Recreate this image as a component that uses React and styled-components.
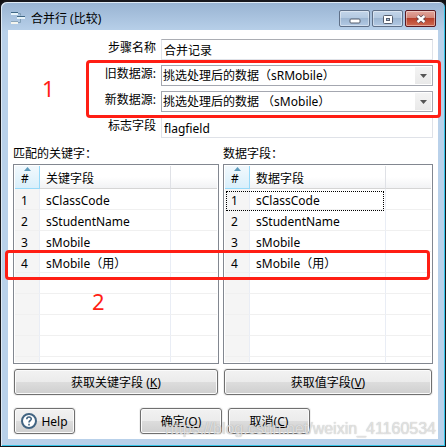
import React, { useState } from "react";
import styled, { createGlobalStyle } from "styled-components";

const GlobalStyle = createGlobalStyle`
  * {
    box-sizing: border-box;
  }
  body {
    margin: 0;
    background: #101014;
    font-family: "Noto Sans", "Noto Sans CJK SC", sans-serif;
    font-size: 12px;
    color: #000;
  }
  button, input, select {
    font: inherit;
    color: inherit;
  }
`;

const Window = styled.main`
  position: relative;
  display: flex;
  flex-direction: column;
  min-height: 100vh;
  padding: 0 7px 7px;
  border: 1px solid #17171c;
  border-top-width: 2px;
  border-radius: 7px 7px 0 0;
  background: linear-gradient(#98b3d2, #b9d1ea 30px);
  box-shadow: inset 1px 1px #dfeaf5, inset -1px -1px #35c4e8;
`;
const TitleBar = styled.header`
  display: flex;
  align-items: flex-start;
  height: 28px;
  padding: 8px 2px 0 3px;
`;
const Title = styled.h1`
  flex: 1;
  margin: 0 0 0 6px;
  font-size: 12px;
  line-height: 18px;
  font-weight: 400;
`;
const Controls = styled.div`
  display: flex;
  gap: 2px;
`;
const ControlButton = styled.button`
  display: flex;
  align-items: center;
  justify-content: center;
  width: 31px;
  height: 17px;
  padding: 0;
  border: 1px solid ${(props) => (props.$close ? "#5a1820" : "#5f7088")};
  border-radius: 2px;
  background: ${(props) =>
    props.$close
      ? "linear-gradient(#e3a59b, #d08376 50%, #b8402b 50%, #cf6a52)"
      : "linear-gradient(#c3d5e9, #b2c8e0 50%, #9db6d2 50%, #b3cae4)"};
  box-shadow: inset 0 0 0 1px rgba(255, 255, 255, 0.4);
`;
const Body = styled.div`
  flex: 1;
  padding: 9px 5px 5px;
  background: #fff;
`;
const Form = styled.form`
  display: flex;
  flex-direction: column;
  gap: 5px;
`;
const Field = styled.div`
  display: flex;
  height: 21px;
`;
const Label = styled.label`
  width: 148px;
  padding-right: 5px;
  line-height: 18px;
  text-align: right;
`;
const Input = styled.input`
  flex: 1;
  min-width: 0;
  padding: 1px 2px 0;
  border: 1px solid #dfe2e8;
  border-top-color: #abadb3;
  outline: none;
`;
const SelectBox = styled.div`
  position: relative;
  display: flex;
  flex: 1;
`;
const Select = styled.select`
  flex: 1;
  padding: 0 20px 0 1px;
  border: 1px solid #a4a7b0;
  border-radius: 0;
  background: #fff;
  appearance: none;
`;
const Arrow = styled.span`
  position: absolute;
  top: 2px;
  right: 2px;
  bottom: 2px;
  display: flex;
  align-items: center;
  justify-content: center;
  width: 16px;
  background: linear-gradient(#f4f4f4, #e9e9e9);
  pointer-events: none;
`;
const Panels = styled.div`
  display: grid;
  grid-template-columns: 103fr 105fr;
  gap: 4px;
  margin-top: 5px;
`;
const Panel = styled.section`
  display: flex;
  flex-direction: column;
`;
const PanelTitle = styled.h2`
  margin: 0;
  font-size: 12px;
  line-height: 21px;
  font-weight: 400;
`;
const TableFrame = styled.div`
  position: relative;
  margin-bottom: 5px;
  padding: 1px;
  border: 1px solid #828790;
`;
const Table = styled.table`
  width: 100%;
  border-collapse: separate;
  border-spacing: 0;
  table-layout: fixed;
`;
const IndexCol = styled.col`
  width: 25px;
`;
const NameCol = styled.col`
  width: ${(props) => props.$width};
`;
const HeadCell = styled.th`
  position: relative;
  height: 23px;
  padding: 4px 0 0 6px;
  border-right: 1px solid #dfe1e6;
  border-bottom: 1px solid #d5d5d5;
  background: linear-gradient(#fff 50%, #f1f2f4);
  line-height: 18px;
  font-weight: 400;
  text-align: left;

  &:first-child {
    border-color: #96d9f9;
    background: linear-gradient(#f2f9fd, #d9effb);
  }
  &:last-child {
    border-right: 0;
  }
`;
const SortMark = styled.svg`
  position: absolute;
  top: 1px;
  left: 9px;
`;
const Cell = styled.td`
  height: 21px;
  padding: 4px 0 0 6px;
  border-right: 1px solid #e9edf5;
  border-bottom: 1px solid #f0f0f0;
  line-height: 16px;
  white-space: nowrap;

  &:first-child {
    background: #f5f5f5;
  }
  &:last-child {
    border-right: 0;
  }
  tr:last-child > & {
    height: 5px;
    border-bottom: 0;
  }
`;
const FocusRing = styled.div`
  position: absolute;
  top: 26px;
  left: 2px;
  width: ${(props) => props.$width};
  height: 20px;
  border: 1px dotted #000;
  pointer-events: none;
`;
const Button = styled.button`
  display: flex;
  align-items: center;
  justify-content: center;
  gap: 4px;
  min-width: ${(props) => props.$width || "auto"};
  height: 26px;
  margin: 0 1px;
  padding: 0 5px;
  border: 1px solid #707070;
  border-radius: 3px;
  background: linear-gradient(#f2f2f2, #ebebeb 50%, #dddddd 50%, #cfcfcf);
  box-shadow: inset 0 0 0 1px #fbfbfb, 0 0 0 1px #f0f0f0;
`;
const Footer = styled.footer`
  display: grid;
  grid-template-columns: 122px auto 1fr;
  gap: 4px;
  justify-items: start;
  margin-top: 13px;
`;
const RedBox = styled.div`
  position: absolute;
  top: ${(props) => props.$top};
  left: ${(props) => props.$left};
  right: ${(props) => props.$right};
  height: ${(props) => props.$height};
  border: 3px solid #ff1e14;
  border-radius: 4px;
  pointer-events: none;
`;
const RedNumber = styled.span`
  position: absolute;
  top: ${(props) => props.$top};
  left: ${(props) => props.$left};
  color: #ff1e14;
  font-size: 22px;
  line-height: 24px;
`;
const Watermark = styled.span`
  position: absolute;
  right: 9px;
  bottom: 7px;
  color: rgba(235, 235, 235, 0.8);
  font-family: "Liberation Sans", sans-serif;
  font-size: 16px;
  line-height: 20px;
  text-shadow: 0 0 1px rgba(120, 120, 120, 0.6);
  pointer-events: none;
`;

const ROWS = ["sClassCode", "sStudentName", "sMobile", "sMobile（用）", "", "", "", "", ""];

function WindowIcon() {
  return (
    <svg width="14" height="16" viewBox="0 0 14 16">
      <path d="M7 3.5h2.500v2M6 12.500h3.500v-4" fill="none" stroke="#7f9db5" />
      <rect x="0" y="2" width="7" height="3" fill="#e8f4fa" />
      <path d="M0 2.500h7" stroke="#3f6785" />
      <rect x="6" y="6" width="8" height="3" fill="#e8f4fa" />
      <path d="M6 6.500h8" stroke="#3f6785" />
      <rect x="0" y="11" width="7" height="3" fill="#f4f4ee" />
      <path d="M0 11.500h7" stroke="#8ba5b9" />
    </svg>
  );
}

function HelpIcon() {
  return (
    <svg width="16" height="16" viewBox="0 0 16 16" fill="none" stroke="#416482" strokeWidth="2">
      <circle cx="8" cy="8" r="7" fill="#fff" />
      <path d="M5.800 6.200c0-3 4.600-2.800 4.500-.2C10.200 7.600 8 7.500 8 9.500M8 10.800v1.700" strokeWidth="1.600" />
    </svg>
  );
}

function SourceSelect({ id, label, value }) {
  return (
    <Field>
      <Label htmlFor={id}>{label}</Label>
      <SelectBox>
        <Select id={id} defaultValue={value}>
          <option>{value}</option>
        </Select>
        <Arrow>
          <svg width="7" height="4">
            <path d="M0 0h7L3.500 4z" fill="#555" />
          </svg>
        </Arrow>
      </SelectBox>
    </Field>
  );
}

function FieldTable({ title, heading, nameWidth, focusWidth, children }) {
  return (
    <Panel>
      <PanelTitle>{title}</PanelTitle>
      <TableFrame>
        <Table aria-label={heading}>
          <colgroup>
            <IndexCol />
            <NameCol $width={nameWidth} />
            <col />
          </colgroup>
          <thead>
            <tr>
              <HeadCell>
                #
                <SortMark width="7" height="4">
                  <path d="M0 4L3.500 0 7 4z" fill="#5f9cbd" />
                </SortMark>
              </HeadCell>
              <HeadCell>{heading}</HeadCell>
              <HeadCell />
            </tr>
          </thead>
          <tbody>
            {ROWS.map((name, i) => (
              <tr key={i}>
                <Cell>{name && i + 1}</Cell>
                <Cell>{name}</Cell>
                <Cell />
              </tr>
            ))}
          </tbody>
        </Table>
        {focusWidth && <FocusRing $width={focusWidth} />}
      </TableFrame>
      {children}
    </Panel>
  );
}

function App() {
  const [stepName, setStepName] = useState("合并记录");
  const [flagField, setFlagField] = useState("flagfield");

  return (
    <>
      <GlobalStyle />
      <Window>
        <TitleBar>
          <WindowIcon />
          <Title>合并行 (比较)</Title>
          <Controls>
            <ControlButton aria-label="最小化">
              <svg width="12" height="12">
                <rect x="1" y="6" width="10" height="4" rx="1" fill="#fff" stroke="#555e6e" />
              </svg>
            </ControlButton>
            <ControlButton aria-label="最大化">
              <svg width="12" height="12">
                <rect x="1.500" y="2.500" width="9" height="8" rx="1" fill="#fff" stroke="#555e6e" />
                <rect x="4.500" y="5.500" width="3" height="2" fill="#a8c0da" stroke="#555e6e" />
              </svg>
            </ControlButton>
            <ControlButton $close aria-label="关闭">
              <svg width="12" height="12">
                <path d="M2.500 3l7 6M9.500 3l-7 6" stroke="#5b4650" strokeWidth="4" />
                <path d="M2.500 3l7 6M9.500 3l-7 6" stroke="#fff" strokeWidth="2.400" />
              </svg>
            </ControlButton>
          </Controls>
        </TitleBar>
        <Body>
          <Form>
            <Field>
              <Label htmlFor="step">步骤名称</Label>
              <Input id="step" value={stepName} onChange={(e) => setStepName(e.target.value)} />
            </Field>
            <SourceSelect id="old" label="旧数据源:" value="挑选处理后的数据（sRMobile）" />
            <SourceSelect id="new" label="新数据源:" value="挑选处理后的数据 （sMobile）" />
            <Field>
              <Label htmlFor="flag">标志字段</Label>
              <Input id="flag" value={flagField} onChange={(e) => setFlagField(e.target.value)} />
            </Field>
          </Form>
          <Panels>
            <FieldTable title="匹配的关键字：" heading="关键字段" nameWidth="131px">
              <Button>
                <span>
                  获取关键字段 (<u>K</u>)
                </span>
              </Button>
            </FieldTable>
            <FieldTable title="数据字段：" heading="数据字段" nameWidth="136px" focusWidth="158px">
              <Button>
                <span>
                  获取值字段(<u>V</u>)
                </span>
              </Button>
            </FieldTable>
          </Panels>
          <Footer>
            <Button $width="61px">
              <HelpIcon />
              Help
            </Button>
            <Button $width="82px">
              <span>
                确定(<u>O</u>)
              </span>
            </Button>
            <Button $width="82px">
              <span>
                取消(<u>C</u>)
              </span>
            </Button>
          </Footer>
        </Body>
        <RedBox $top="58px" $left="85px" $right="4px" $height="58px" />
        <RedBox $top="248px" $left="4px" $right="15px" $height="30px" />
        <RedNumber $top="74px" $left="41px">1</RedNumber>
        <RedNumber $top="287px" $left="91px">2</RedNumber>
        <Watermark>https://blog.csdn.net/weixin_41160534</Watermark>
      </Window>
    </>
  );
}

export default App;
